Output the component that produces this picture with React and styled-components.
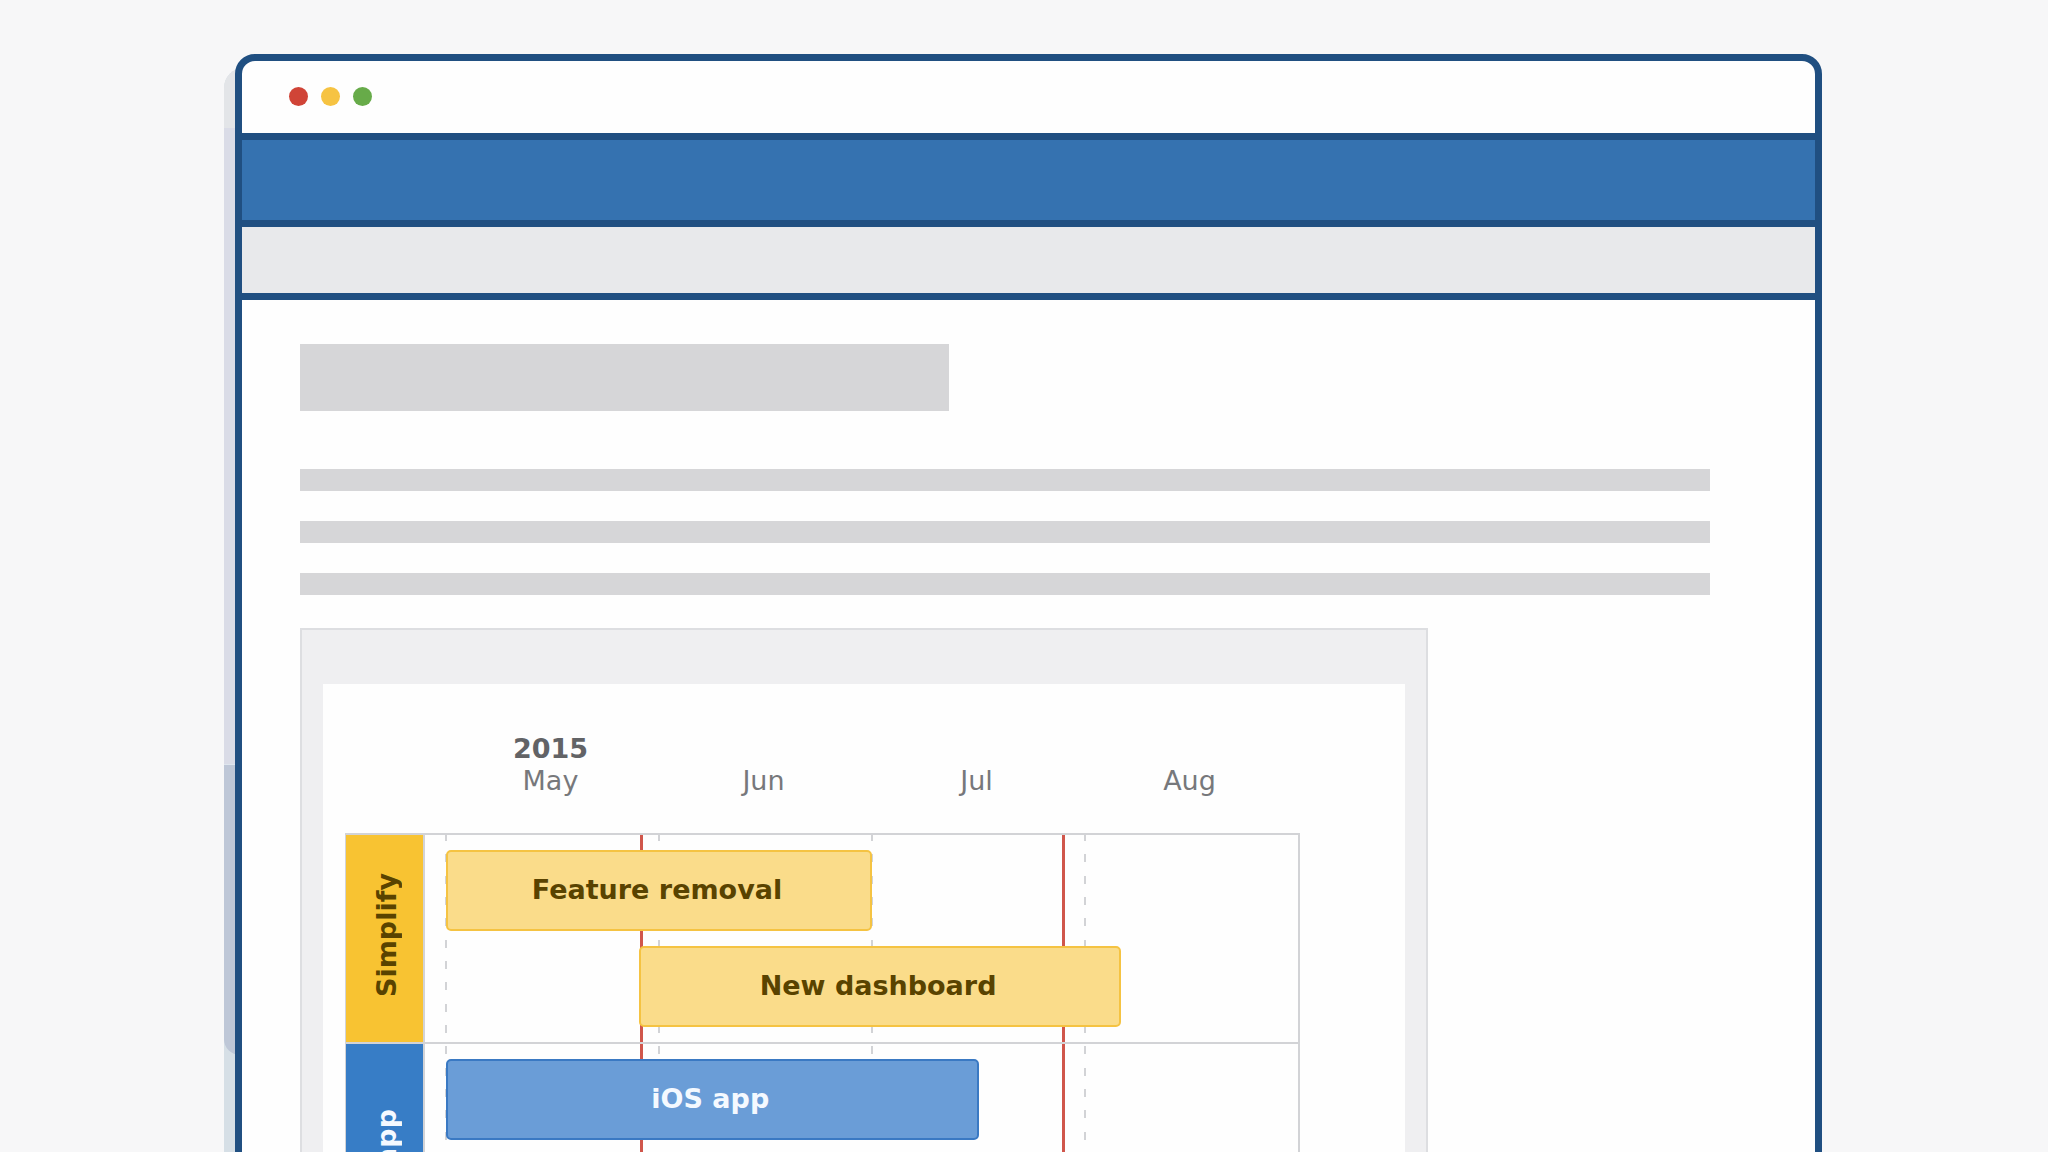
import React from "react";
import styled, { createGlobalStyle } from "styled-components";

const colors = {
  page: "#f7f7f8",
  frame: "#204f81",
  header: "#3572b0",
  toolbar: "#e8e9eb",
  placeholder: "#d6d6d8",
  macro: "#efeff1",
  macroBorder: "#dddee1",
  line: "#d2d3d6",
  marker: "#d0564b",
  white: "#fefefe",
};

const themes = {
  yellow: { lane: "#f8c332", fill: "#fadc8a", border: "#f5c342", text: "#594300" },
  blue: { lane: "#377dc6", fill: "#6a9dd7", border: "#3a79c3", text: "#f4f9ff" },
};

// Positions are in months, counted from the first month on the axis.
const months = ["May", "Jun", "Jul", "Aug"];
const markers = [0.914, 2.896];
const lanes = [
  {
    title: "Simplify",
    theme: "yellow",
    slots: 2,
    bars: [
      { title: "Feature removal", start: 0, end: 2 },
      { title: "New dashboard", start: 0.906, end: 3.17 },
    ],
  },
  {
    title: "Mobile app",
    theme: "blue",
    slots: 3,
    bars: [{ title: "iOS app", start: 0, end: 2.5 }],
  },
];

const toPercent = (value) => `${(value / months.length) * 100}%`;

const GlobalStyle = createGlobalStyle`
  * {
    box-sizing: border-box;
  }
  body {
    margin: 0;
    background: ${colors.page};
    font-family: "DejaVu Sans", Verdana, sans-serif;
  }
`;

const Stage = styled.main`
  height: 100vh;
  overflow: hidden;
  padding: 54px 226px 0 235px;
`;

const Frame = styled.div`
  position: relative;
`;

const Backdrop = styled.div`
  position: absolute;
  inset: 14px 50% 0 -11px;
  display: flex;
  flex-direction: column;
  overflow: hidden;
  border-top-left-radius: 20px;
  background: #d6dfe6;
`;

const BackdropTop = styled.div`
  flex: 0 0 60px;
  background: #e3e5e8;
`;

const BackdropBody = styled.div`
  flex: 0 0 636px;
  background: #dadce7;
`;

const BackdropCard = styled.div`
  flex: 0 0 291px;
  border-top: 1px solid #dfe6ee;
  border-bottom-left-radius: 16px;
  background: #bec7d7;
`;

const Window = styled.div`
  position: relative;
  overflow: hidden;
  border: 7px solid ${colors.frame};
  border-radius: 20px;
  background: ${colors.white};
`;

const TitleBar = styled.div`
  display: flex;
  align-items: center;
  gap: 13px;
  height: 79px;
  padding: 0 0 2px 47px;
  border-bottom: 7px solid ${colors.frame};
`;

const Dot = styled.span`
  width: 19px;
  height: 19px;
  border-radius: 50%;
  background: ${(props) => props.$color};
`;

const HeaderBar = styled.div`
  height: 87px;
  border-bottom: 7px solid ${colors.frame};
  background: ${colors.header};
`;

const Toolbar = styled.div`
  height: 73px;
  border-bottom: 7px solid ${colors.frame};
  background: ${colors.toolbar};
`;

const Content = styled.div`
  padding: 44px 105px 60px 58px;
`;

const Heading = styled.div`
  width: 46%;
  height: 67px;
  margin-bottom: 58px;
  background: ${colors.placeholder};
`;

const Paragraph = styled.div`
  display: flex;
  flex-direction: column;
  gap: 30px;
  margin-bottom: 33px;
`;

const Line = styled.div`
  height: 22px;
  background: ${colors.placeholder};
`;

const Macro = styled.section`
  width: 80%;
  padding: 54px 21px 21px;
  border: 2px solid ${colors.macroBorder};
  background: ${colors.macro};
`;

const Roadmap = styled.div`
  padding: 49px 105px 49px 22px;
  background: ${colors.white};
`;

const Axis = styled.div`
  display: flex;
  align-items: flex-end;
  margin-bottom: 36px;
  padding-left: 99px;
  padding-right: 4px;
`;

const Month = styled.div`
  flex: 1;
  color: #77787b;
  font-size: 27px;
  line-height: 32px;
  text-align: center;
`;

const Year = styled.div`
  color: #626366;
  font-weight: bold;
`;

const Lanes = styled.div`
  position: relative;
  border: 2px solid ${colors.line};
  border-left-width: 1px;
`;

const Guides = styled.div`
  position: absolute;
  inset: 0 0 0 100px;
`;

const MonthLine = styled.i`
  position: absolute;
  top: 0;
  bottom: 0;
  width: 2px;
  margin-left: -1px;
  background: repeating-linear-gradient(
    ${colors.line} 0 6px,
    transparent 6px 19px,
    ${colors.line} 19px 27px,
    transparent 27px 41px,
    ${colors.line} 41px 49px,
    transparent 49px 62px,
    ${colors.line} 62px 64px
  );
`;

const Marker = styled.i`
  position: absolute;
  top: 0;
  bottom: 0;
  width: 3px;
  margin-left: -1px;
  background: ${colors.marker};
`;

const Lane = styled.div`
  position: relative;
  display: flex;
  & + & {
    border-top: 2px solid ${colors.line};
  }
`;

const LaneTitle = styled.div`
  display: flex;
  align-items: center;
  justify-content: center;
  width: 79px;
  padding: 0 0 6px 4px;
  border-right: 2px solid ${colors.line};
  background: ${(props) => themes[props.$theme].lane};
  color: ${(props) => themes[props.$theme].text};
  font-size: 27px;
  font-weight: bold;
  line-height: 32px;
  white-space: nowrap;
  span {
    writing-mode: vertical-rl;
    transform: rotate(180deg);
  }
`;

const Track = styled.div`
  flex: 1;
  display: grid;
  grid-template-rows: repeat(${(props) => props.$slots}, 81px);
  gap: 15px;
  padding: 15px 0 15px 21px;
`;

const Bar = styled.div`
  display: flex;
  align-items: center;
  justify-content: center;
  padding: 0 4px 2px 0;
  border: 2px solid ${(props) => themes[props.$theme].border};
  border-radius: 5px;
  background: ${(props) => themes[props.$theme].fill};
  color: ${(props) => themes[props.$theme].text};
  font-size: 27px;
  font-weight: bold;
  line-height: 32px;
  white-space: nowrap;
`;

const RoadmapLane = ({ title, theme, slots, bars }) => (
  <Lane>
    <LaneTitle $theme={theme}>
      <span>{title}</span>
    </LaneTitle>
    <Track $slots={slots}>
      {bars.map((bar) => (
        <Bar
          key={bar.title}
          $theme={theme}
          style={{ marginLeft: toPercent(bar.start), width: toPercent(bar.end - bar.start) }}
        >
          {bar.title}
        </Bar>
      ))}
    </Track>
  </Lane>
);

export default () => {
  return (
    <Stage>
      <GlobalStyle />
      <Frame>
        <Backdrop>
          <BackdropTop />
          <BackdropBody />
          <BackdropCard />
        </Backdrop>
        <Window>
          <TitleBar>
            <Dot $color="#d04437" />
            <Dot $color="#f6c342" />
            <Dot $color="#67ab49" />
          </TitleBar>
          <HeaderBar />
          <Toolbar />
          <Content>
            <Heading />
            <Paragraph>
              <Line />
              <Line />
              <Line />
            </Paragraph>
            <Macro>
              <Roadmap>
                <Axis>
                  {months.map((month, i) => (
                    <Month key={month}>
                      {i === 0 && <Year>2015</Year>}
                      {month}
                    </Month>
                  ))}
                </Axis>
                <Lanes>
                  <Guides>
                    {months.map((month, i) => (
                      <MonthLine key={month} style={{ left: toPercent(i) }} />
                    ))}
                    {markers.map((marker) => (
                      <Marker key={marker} style={{ left: toPercent(marker) }} />
                    ))}
                  </Guides>
                  {lanes.map((lane) => (
                    <RoadmapLane key={lane.title} {...lane} />
                  ))}
                </Lanes>
              </Roadmap>
            </Macro>
          </Content>
        </Window>
      </Frame>
    </Stage>
  );
};
